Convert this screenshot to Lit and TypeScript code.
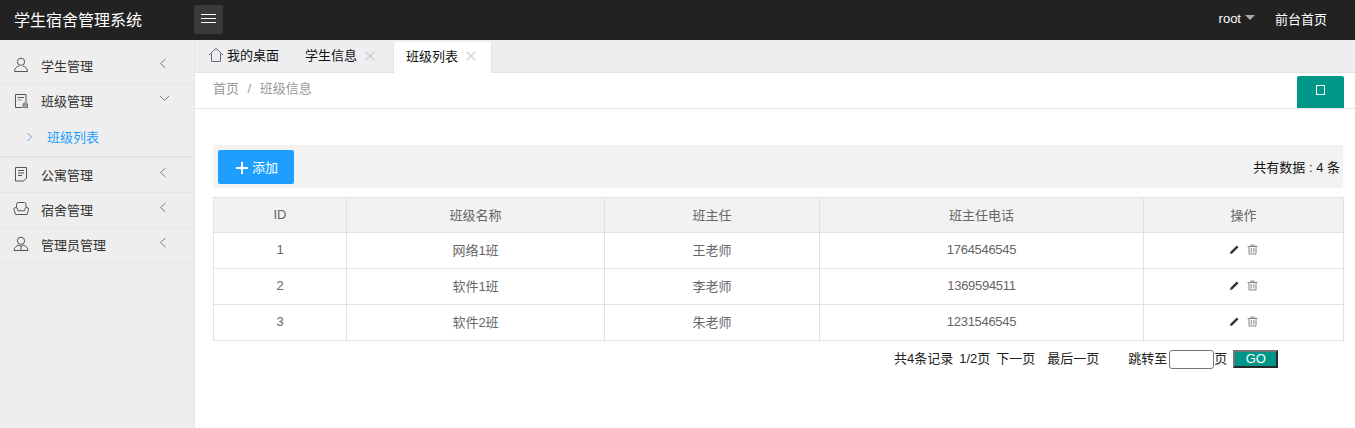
import { LitElement, html, css, svg } from "lit";
import { customElement } from "lit/decorators.js";

const chevL = svg`<path d="M7.500 1 L2.500 5.500 L7.500 10" fill="none" stroke="#6d8496" stroke-width="1"/>`;
const chevD = svg`<path d="M2 3 L6.500 7.500 L11 3" fill="none" stroke="#6d8496" stroke-width="1"/>`;
const ic = "#555";
const icons: Record<string, unknown> = {
  user: svg`<circle cx="8" cy="4.800" r="3.600" fill="none" stroke="${ic}"/><path d="M1.500 14.500 C1.500 11 4 9.500 6 9 M14.500 14.500 C14.500 11 12 9.500 10 9 M1.500 14.500 H14.500" fill="none" stroke="${ic}"/>`,
  cls: svg`<path d="M9 14.500 H2.500 V1.500 H13 V9" fill="none" stroke="${ic}"/><path d="M4.500 4.500 H11 " stroke="${ic}"/><path d="M4.500 7 H9" stroke="#999"/><rect x="10" y="11" width="4.500" height="3.500" fill="#aaa" stroke="#777"/><path d="M11 11 V9.800 H13.500 V11" fill="none" stroke="#888"/>`,
  apt: svg`<path d="M2.500 1.500 H13.500 V12 L10.500 15 H2.500 Z" fill="none" stroke="${ic}"/><path d="M5 4.500 H11 M5 7 H11 M5 9.500 H9" stroke="${ic}"/>`,
  sofa: svg`<path d="M3.500 6.500 V3.500 Q3.500 1.500 5 1.500 H11.500 Q13 1.500 13 3.500 V6.500" fill="none" stroke="${ic}"/><path d="M2.800 6.500 Q0.500 6.500 1 8.800 L2.500 13.500 H14 L15.500 8.800 Q16 6.500 13.700 6.500 Q11.500 6.500 11.500 9.800 H5 Q5 6.500 2.800 6.500 Z" fill="none" stroke="${ic}"/>`,
  admin: svg`<circle cx="8" cy="4.800" r="3.600" fill="none" stroke="${ic}"/><path d="M6 9 C3 10 1 12 1 14.500 H15 C15 12 13 10 10 9 L8 10.500 Z M8 10.500 V14.500" fill="none" stroke="${ic}"/>`,
};

@customElement("app-root")
export class AppRoot extends LitElement {
  static styles = css`
    :host { display: block; width: 1355px; height: 428px; overflow: hidden; font-family: "Liberation Sans", "Noto Sans CJK SC", sans-serif; font-size: 13px; color: #333; background: #fff; }
    .top { height: 40px; background: #222; display: flex; align-items: center; color: #fff; }
    .brand { width: 194px; padding-left: 14px; box-sizing: border-box; font-size: 16px; margin-top: -2px; }
    .burger { width: 29px; height: 29px; border-radius: 2px; background: #3a3a3a; display: flex; align-items: center; justify-content: center; margin-top: -1px; }
    .burger svg { margin-top: -1px; }
    .spacer { flex: 1; }
    .root { display: flex; align-items: center; gap: 4px; font-size: 13px; margin-right: 20px; margin-top: -3px; }
    .caret { width: 0; height: 0; border-left: 5.500px solid transparent; border-right: 5.500px solid transparent; border-top: 5px solid #aaa; margin-top: -3px; }
    .home { margin-right: 28px; font-size: 13px; margin-top: -4px; }

    .body { display: flex; height: 388px; }
    .side { width: 195px; box-sizing: border-box; background: #eee; border-right: 1px solid #e6e6e6; padding-top: 9px; flex: none; }
    .item { height: 35px; border-bottom: 1px solid #e4e4e4; box-sizing: border-box; display: flex; align-items: center; padding-bottom: 2px; }
    .item .ico { width: 16px; height: 16px; margin-left: 13px; flex: none; }
    .item .lbl { margin-left: 12px; flex: 1; font-size: 13px; }
    .item .chev { width: 13px; height: 12px; margin-right: 23px; margin-top: -3px; flex: none; }
    .item.open { border-bottom: none; padding-bottom: 2px; }
    .sub { height: 38px; box-sizing: border-box; border-bottom: 2px solid #e4e4e4; display: flex; align-items: center; color: #1e9fff; padding: 0 0 3px 26px; margin-top: 1px; }
    .sub svg { width: 7px; height: 10px; margin-right: 14px; }

    .main { flex: 1; display: flex; flex-direction: column; min-width: 0; }
    .tabs { height: 33px; box-sizing: border-box; background: #eeeef0; border-bottom: 1px solid #e2e2e2; display: flex; align-items: flex-end; font-size: 13px; color: #111; }
    .tab { height: 31px; display: flex; align-items: center; box-sizing: border-box; }
    .tab.desk { width: 96px; padding-left: 13px; gap: 3px; padding-bottom: 4px; }
    .tab.desk svg { width: 16px; height: 16px; }
    .tab.info { width: 102px; padding-left: 14px; padding-bottom: 4px; }
    .tab.cur { width: 99px; padding-left: 12px; background: #fff; border: 1px solid #e2e2e2; border-top: none; border-bottom: none; height: 31px; margin-bottom: -1px; padding-bottom: 5px; }
    .x { width: 10px; height: 10px; margin-left: 8px; margin-top: 2px; }

    .crumb { height: 36px; border-bottom: 1px solid #e2e2e2; box-sizing: border-box; display: flex; align-items: flex-start; padding-left: 18px; color: #999; line-height: 31px; font-size: 13px; position: relative; }
    .crumb .sep { margin: 0 8.500px; }
    .refresh { position: absolute; right: 11px; top: 3px; width: 47px; height: 32px; background: #009688; border-radius: 2px 2px 0 0; display: flex; align-items: center; justify-content: center; }
    .refresh i { width: 7px; height: 8px; border: 1px solid #fff; display: block; margin: -4px 0 0 -1px; }

    .content { padding: 36px 12px 0 18px; }
    .bar { height: 43px; background: #f2f2f2; display: flex; align-items: center; justify-content: space-between; padding: 0 3px 0 5px; margin-bottom: 9px; font-size: 13px; color: #111; }
    .btn { width: 76px; height: 34px; background: #1e9fff; border-radius: 2px; color: #fff; display: flex; align-items: center; justify-content: center; gap: 4px; padding-left: 2px; box-sizing: border-box; font-size: 13px; }
    .btn svg { width: 12px; height: 12px; margin-top: 2px; }
    table { width: 1131px; border-collapse: collapse; table-layout: fixed; color: #666; font-size: 13px; }
    th, td { border: 1px solid #e2e2e2; text-align: center; padding: 0 0 2px; height: 33px; font-weight: 400; box-sizing: content-box; }
    th { height: 32px; }
    thead tr { background: #f2f2f2; }
    .phone { letter-spacing: -0.300px; }
    .ops { display: flex; justify-content: center; align-items: center; gap: 7px; padding-right: 1px; }
    .ops svg { width: 11px; height: 11px; }
    .pager { display: flex; align-items: center; height: 36px; margin-left: 681px; color: #222; font-size: 13px; }
    .t { padding-bottom: 4px; }
    .pager input { width: 45px; height: 19px; box-sizing: border-box; border: 1px solid #767676; border-radius: 3px; padding: 0; background: #fff; }
    .go { width: 45px; height: 18px; box-sizing: border-box; margin-left: 6px; background: #009688; color: #fff; border-style: solid; border-width: 2px; border-color: #777 #2a2a2a #2a2a2a #777; font-size: 13px; line-height: 13px; text-align: center; }
  `;

  private menu(icon: string, label: string, open = false) {
    return html`<div class="item ${open ? "open" : ""}">
      <svg class="ico" viewBox="0 0 16 16">${icons[icon]}</svg>
      <span class="lbl">${label}</span>
      <svg class="chev" viewBox="0 0 13 12">${open ? chevD : chevL}</svg>
    </div>`;
  }

  render() {
    const rows = [
      ["1", "网络1班", "王老师", "1764546545"],
      ["2", "软件1班", "李老师", "1369594511"],
      ["3", "软件2班", "朱老师", "1231546545"],
    ];
    const x = svg`<path d="M1 1 L9 9 M9 1 L1 9" stroke="#ccc" stroke-width="1.100"/>`;
    return html`
      <div class="top">
        <div class="brand">学生宿舍管理系统</div>
        <div class="burger"><svg width="15" height="10" viewBox="0 0 15 10"><path d="M0 .5 H15 M0 4.500 H15 M0 8.500 H15" stroke="#fff"/></svg></div>
        <div class="spacer"></div>
        <div class="root">root<span class="caret"></span></div>
        <div class="home">前台首页</div>
      </div>
      <div class="body">
        <div class="side">
          ${this.menu("user", "学生管理")}
          ${this.menu("cls", "班级管理", true)}
          <div class="sub"><svg viewBox="0 0 7 10"><path d="M1.500 1 L5.500 5 L1.500 9" fill="none" stroke="#6f9fe0"/></svg>班级列表</div>
          ${this.menu("apt", "公寓管理")}
          ${this.menu("sofa", "宿舍管理")}
          ${this.menu("admin", "管理员管理")}
        </div>
        <div class="main">
          <div class="tabs">
            <div class="tab desk"><svg viewBox="0 0 16 16"><path d="M1 8 L8 1.500 L15 8 M3.500 6.500 V14.500 H12.500 V6.500" fill="none" stroke="#667"/></svg>我的桌面</div>
            <div class="tab info">学生信息<svg class="x" viewBox="0 0 10 10">${x}</svg></div>
            <div class="tab cur">班级列表<svg class="x" viewBox="0 0 10 10">${x}</svg></div>
          </div>
          <div class="crumb">首页<span class="sep">/</span>班级信息<div class="refresh"><i></i></div></div>
          <div class="content">
            <div class="bar">
              <div class="btn"><svg viewBox="0 0 12 12"><path d="M6 0 V12 M0 6 H12" stroke="#fff" stroke-width="2"/></svg>添加</div>
              <div>共有数据 : 4 条</div>
            </div>
            <table>
              <colgroup><col style="width:133px"/><col style="width:258px"/><col style="width:215px"/><col style="width:324px"/><col style="width:200px"/></colgroup>
              <thead><tr><th>ID</th><th>班级名称</th><th>班主任</th><th>班主任电话</th><th>操作</th></tr></thead>
              <tbody>
                ${rows.map((r) => html`<tr>${r.map((c, i) => html`<td class=${i === 3 ? "phone" : ""}>${c}</td>`)}<td><div class="ops">
                  <svg viewBox="0 0 11 11"><path d="M1 10 L1.500 7.800 L7.800 1.500 L9.500 3.200 L3.200 9.500 Z" fill="#333"/></svg>
                  <svg viewBox="0 0 11 11"><path d="M.5 2.500 H10.500 M3.800 2.500 V1 H7.200 V2.500 M2 2.500 V10 H9 V2.500 M4.200 4 V8.500 M6.800 4 V8.500" fill="none" stroke="#888"/></svg>
                </div></td></tr>`)}
              </tbody>
            </table>
            <div class="pager"><span class="t">共4条记录</span><span class="t" style="margin-left:6px">1/2页</span><span class="t" style="margin-left:6px">下一页</span><span class="t" style="margin-left:12px">最后一页</span><span class="t" style="margin-left:29px">跳转至</span><input style="margin-left:2px" /><span class="t">页</span><span class="go">GO</span></div>
          </div>
        </div>
      </div>
    `;
  }
}
